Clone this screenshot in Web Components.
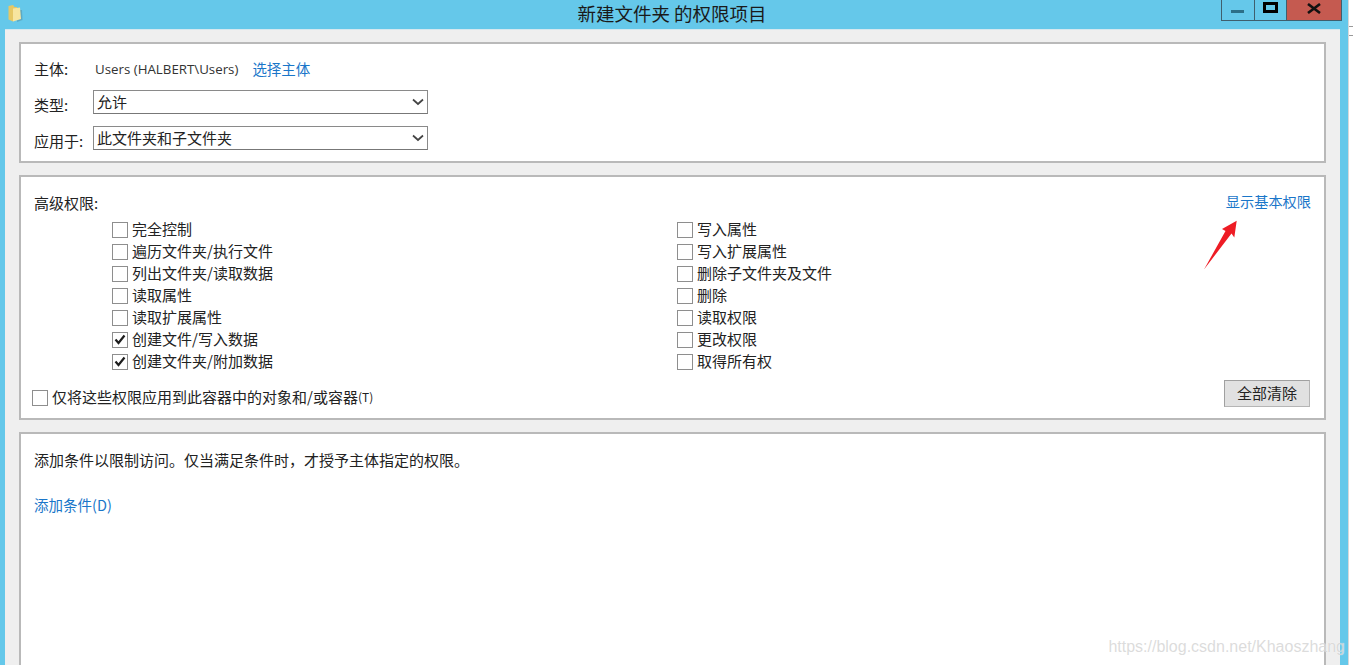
<!DOCTYPE html>
<html lang="zh">
<head>
<meta charset="utf-8">
<title>新建文件夹 的权限项目</title>
<style>
  html, body { margin: 0; padding: 0; height: 100%; overflow: hidden; background: #fff; }
  body { font-family: "Noto Sans CJK SC", "Noto Sans", sans-serif; color: #222; }
</style>
</head>
<body>
<perm-window>
  <perm-panel style="height:121px" pad="15px 13px 0">
    <perm-row label="主体:" style="height:20px">
      <span style="font:13.3px 'Open Sans',sans-serif;color:#333;margin:0 14px 0 2px">Users (HALBERT\Users)</span>
      <perm-link style="font-size:14.5px">选择主体</perm-link>
    </perm-row>
    <perm-row label="类型:" drop style="margin-top:11px"><perm-select>允许</perm-select></perm-row>
    <perm-row label="应用于:" drop style="margin-top:12px"><perm-select>此文件夹和子文件夹</perm-select></perm-row>
  </perm-panel>

  <perm-panel style="height:245px;margin-top:12px" pad="16px 14px 0 13px">
    <adv-perms></adv-perms>
  </perm-panel>

  <perm-panel style="flex:1;margin-top:12px;border-bottom:0" pad="16px 13px 0">
    <div style="font-size:15px;line-height:20px;height:20px;color:#222">添加条件以限制访问。仅当满足条件时，才授予主体指定的权限。</div>
    <div style="margin-top:22px"><perm-link style="font-size:14.5px">添加条件(D)</perm-link></div>
  </perm-panel>
</perm-window>

<script>
// title bar with folder icon and the three window buttons
class PermTitlebar extends HTMLElement {
  constructor() {
    super();
    this.attachShadow({ mode: 'open' });
    this.shadowRoot.innerHTML = `
      <style>
        :host { display: flex; position: relative; height: 29px; background: #65c8ea; align-items: flex-start; }
        .icon { margin: 4px 0 0 7px; width: 17px; height: 19px; position: relative; }
        h1 {
          position: absolute; left: 0; right: 0; top: 0; margin: 0; text-align: center;
          padding-right: 4px;
          font: 400 18.5px/27px "Noto Sans CJK SC", sans-serif; color: #1a1a1a;
        }
        .btns {
          display: flex; margin-left: auto; margin-right: 6px; height: 21px; position: relative;
          border: 1px solid #3f5f6e; border-top: 0; box-sizing: border-box; width: 121px;
        }
        .btns div { display: flex; align-items: center; justify-content: center; height: 100%; box-sizing: border-box; }
        .min { width: 33px; border-right: 1px solid #3f5f6e; }
        .max { width: 32px; border-right: 1px solid #3f5f6e; }
        .close { flex: 1; background: #c55a50; }
      </style>
      <svg class="icon" viewBox="0 0 17 19">
        <path d="M10 6 L15 6 L15.5 16 L10 18 Z" fill="#5a9db4" opacity=".7"/>
        <path d="M1.5 2 L6 1 L7.5 3 L10 3 L10 15 L6 17.5 L1.5 15.5 Z" fill="#e6c866"/>
        <path d="M6 4.5 L13 3.5 L14 15 L6 17.5 Z" fill="#f7e5a0"/>
      </svg>
      <h1>新建文件夹 的权限项目</h1>
      <div class="btns">
        <div class="min"><svg width="14" height="6" viewBox="0 0 14 6" style="margin-top:4px"><rect x="0" y="1" width="13" height="3" fill="#2c6f88"/></svg></div>
        <div class="max"><svg width="16" height="12" viewBox="0 0 16 12" style="margin-top:-4px"><rect x="1.5" y="1.5" width="12" height="8" fill="none" stroke="#000" stroke-width="3"/></svg></div>
        <div class="close"><svg width="14" height="11" viewBox="0 0 14 11" style="margin-top:-3px"><path d="M1 1 L13 10 M13 1 L1 10" stroke="#111" stroke-width="2.6" fill="none"/></svg></div>
      </div>
    `;
  }
}
customElements.define('perm-titlebar', PermTitlebar);

// outer window: blue frame, grey client area, watermark on top
class PermWindow extends HTMLElement {
  constructor() {
    super();
    this.attachShadow({ mode: 'open' });
    this.shadowRoot.innerHTML = `
      <style>
        :host { display: flex; height: 665px; width: 1353px; position: relative; overflow: hidden; }
        .win { width: 1348px; display: flex; flex-direction: column; background: #65c8ea; }
        .client {
          flex: 1; display: flex; flex-direction: column; box-sizing: border-box;
          margin: 0 8px 0 5px; padding: 12px 14px 0; background: #efefef;
          border-top: 1px solid #d5e8ef;
        }
        .edge { flex: 1; background: #fff; border-left: 1px solid #d8d8d8; position: relative; }
        .edge i { position: absolute; left: 0; right: 0; height: 1px; background: #999; }
        .mark {
          position: absolute; right: 8px; top: 638px;
          font: 16px "Liberation Sans", sans-serif; color: rgba(190,190,190,.55);
          text-shadow: 0 0 1px rgba(255,255,255,.9); white-space: nowrap;
        }
      </style>
      <div class="win">
        <perm-titlebar></perm-titlebar>
        <div class="client"><slot></slot></div>
      </div>
      <div class="edge"><i style="top:26px"></i><i style="top:35px"></i></div>
      <div class="mark">https://blog.csdn.net/Khaoszhang</div>
    `;
  }
}
customElements.define('perm-window', PermWindow);

class PermPanel extends HTMLElement {
  constructor() {
    super();
    this.attachShadow({ mode: 'open' });
    this.shadowRoot.innerHTML = `
      <style>
        :host { display: block; box-sizing: border-box; background: #fff; border: 2px solid #b9b9b9; flex: none; }
        .in { box-sizing: border-box; height: 100%; position: relative; }
      </style>
      <div class="in"><slot></slot></div>
    `;
  }
  connectedCallback() {
    this.shadowRoot.querySelector('.in').style.padding = this.getAttribute('pad') || '0';
  }
}
customElements.define('perm-panel', PermPanel);

// label column + control
class PermRow extends HTMLElement {
  constructor() {
    super();
    this.attachShadow({ mode: 'open' });
    this.shadowRoot.innerHTML = `
      <style>
        :host { display: flex; align-items: center; }
        .l { width: 59px; flex: none; font-size: 15px; line-height: 20px; color: #222; }
        :host([drop]) .l { transform: translateY(3px); }
      </style>
      <span class="l"></span><slot></slot>
    `;
  }
  connectedCallback() {
    this.shadowRoot.querySelector('.l').textContent = this.getAttribute('label');
  }
}
customElements.define('perm-row', PermRow);

class PermSelect extends HTMLElement {
  constructor() {
    super();
    this.attachShadow({ mode: 'open' });
    this.shadowRoot.innerHTML = `
      <style>
        :host {
          display: flex; align-items: center; justify-content: space-between; box-sizing: border-box;
          width: 335px; height: 24px; border: 1px solid #8a8a8a; border-bottom-color: #777;
          background: #fff; padding: 0 3px 2px 3px; font-size: 15px; color: #222;
        }
        svg { display: block; margin-top: 2px; }
      </style>
      <slot></slot>
      <svg width="12" height="8" viewBox="0 0 12 8"><path d="M1 1.5 L6 6 L11 1.5" fill="none" stroke="#444" stroke-width="1.7"/></svg>
    `;
  }
}
customElements.define('perm-select', PermSelect);

class PermLink extends HTMLElement {
  constructor() {
    super();
    this.attachShadow({ mode: 'open' });
    this.shadowRoot.innerHTML = `
      <style>:host { display: inline-block; font-size: 14.2px; line-height: 20px; color: #1a76c9; }</style>
      <slot></slot>
    `;
  }
}
customElements.define('perm-link', PermLink);

class PermCheck extends HTMLElement {
  constructor() {
    super();
    this.attachShadow({ mode: 'open' });
    this.shadowRoot.innerHTML = `
      <style>
        :host { display: flex; align-items: center; height: 22px; font-size: 15px; color: #222; white-space: nowrap; }
        .box {
          width: 16px; height: 16px; box-sizing: border-box; border: 1px solid #8e8e8e; background: #fff;
          margin: 3px 4px 0 0; flex: none; display: flex; align-items: center; justify-content: center;
        }
        svg { display: none; }
        :host([checked]) svg { display: block; }
      </style>
      <span class="box"><svg width="12" height="11" viewBox="0 0 12 11"><path d="M1.5 5.5 L4.5 9 L10.5 1.5" fill="none" stroke="#1d1d1d" stroke-width="2.2"/></svg></span>
      <slot></slot>
    `;
  }
}
customElements.define('perm-check', PermCheck);

// the advanced permissions block
const LEFT = [['完全控制'], ['遍历文件夹/执行文件'], ['列出文件夹/读取数据'], ['读取属性'], ['读取扩展属性'], ['创建文件/写入数据', 1], ['创建文件夹/附加数据', 1]];
const RIGHT = [['写入属性'], ['写入扩展属性'], ['删除子文件夹及文件'], ['删除'], ['读取权限'], ['更改权限'], ['取得所有权']];

class AdvPerms extends HTMLElement {
  constructor() {
    super();
    this.attachShadow({ mode: 'open' });
    const col = items => items.map(([t, c]) => `<perm-check ${c ? 'checked' : ''}>${t}</perm-check>`).join('');
    this.shadowRoot.innerHTML = `
      <style>
        :host { display: block; font-size: 15px; color: #222; }
        .head { display: flex; justify-content: space-between; height: 20px; line-height: 20px; }
        .head perm-link { margin: -2px -1px 0 0; }
        .cols { display: grid; grid-template-columns: 565px 1fr; margin: 4px 0 0 78px; }
        .foot { display: flex; justify-content: space-between; align-items: flex-start; margin: 9px 0 0 -2px; }
        .foot perm-check { margin-top: 5px; }
        button {
          width: 86px; height: 27px; padding: 0 0 2px; font: 15px "Noto Sans CJK SC", sans-serif; color: #222;
          background: #e1e1e1; border: 1px solid #a0a0a0; border-right-color: #b5b5b5; border-bottom-color: #b5b5b5;
        }
        small { font: 12px "Noto Sans CJK SC", sans-serif; }
        .arrow { position: absolute; left: 1182px; top: 43px; }
      </style>
      <div class="head"><span>高级权限:</span><perm-link>显示基本权限</perm-link></div>
      <div class="cols"><div>${col(LEFT)}</div><div>${col(RIGHT)}</div></div>
      <div class="foot">
        <perm-check>仅将这些权限应用到此容器中的对象和/或容器<small>(T)</small></perm-check>
        <button>全部清除</button>
      </div>
      <svg class="arrow" width="36" height="52" viewBox="0 0 36 52">
        <path d="M1 49.5 L22.5 11 L19 9 L33.7 0.7 L31.3 17.5 L28.5 13.5 Z" fill="#ee1c25"/>
      </svg>
    `;
  }
}
customElements.define('adv-perms', AdvPerms);
</script>
</body>
</html>
